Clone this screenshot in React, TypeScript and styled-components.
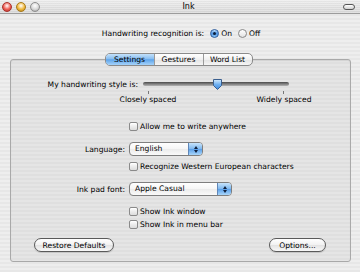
import React from "react";
import styled, { createGlobalStyle } from "styled-components";

const Global = createGlobalStyle`
  html, body { margin: 0; padding: 0; }
  body { width: 360px; height: 272px; overflow: hidden; background: #e9e9e9; }
  * { box-sizing: border-box; }
`;

const FONT = `"DejaVu Sans", "Liberation Sans", sans-serif`;

const Window = styled.div`
  width: 360px;
  height: 272px;
  display: flex;
  flex-direction: column;
  font-family: ${FONT};
  font-size: 7.6px;
  color: #000;
  background: repeating-linear-gradient(180deg, #eeeeee 0 2px, #e7e7e7 2px 4px);
`;

const TitleBar = styled.div`
  height: 14px;
  flex: none;
  display: flex;
  align-items: center;
  padding: 0 5px 0 2px;
  border-bottom: 1px solid #9c9c9c;
  background:
    repeating-linear-gradient(180deg, rgba(255,255,255,0.25) 0 1px, rgba(0,0,0,0.02) 1px 2px),
    linear-gradient(180deg, #ececec 0%, #d8d8d8 100%);
`;

const Lights = styled.div`
  display: flex;
  gap: 4px;
  width: 40px;
`;

const Light = styled.span<{ $c: string; $d: string }>`
  width: 10px;
  height: 10px;
  border-radius: 50%;
  border: 1px solid ${(p) => p.$d};
  background: radial-gradient(circle at 50% 35%, #ffffff 0%, ${(p) => p.$c} 55%, ${(p) => p.$d} 100%);
`;

const Title = styled.div`
  flex: 1;
  text-align: center;
  font-size: 8px;
  padding-right: 8px;
`;

const Pill = styled.span`
  width: 12px;
  height: 6px;
  border-radius: 3px;
  border: 1px solid #555;
  background: linear-gradient(180deg, #fff, #d0d0d0);
`;

const Header = styled.div`
  margin-top: 13px;
  height: 13px;
  display: flex;
  align-items: center;
  justify-content: center;
  gap: 3px;
  padding-left: 2px;
`;

const RadioItem = styled.label`
  display: flex;
  align-items: center;
  gap: 2px;
  margin-left: 3px;
`;

const Radio = styled.span<{ $on?: boolean }>`
  width: 9px;
  height: 9px;
  border-radius: 50%;
  display: flex;
  align-items: center;
  justify-content: center;
  border: 1px solid ${(p) => (p.$on ? "#2a5a9c" : "#888")};
  background: ${(p) =>
    p.$on
      ? "linear-gradient(180deg, #bfe0fb 0%, #4f95e3 50%, #8cc6f6 100%)"
      : "linear-gradient(180deg, #ffffff 0%, #e2e2e2 100%)"};
  &::after {
    content: "";
    width: 3px;
    height: 3px;
    border-radius: 50%;
    background: ${(p) => (p.$on ? "#0b1e3a" : "transparent")};
  }
`;

const TabView = styled.div`
  margin: 13px 9px 0 10px;
  display: flex;
  flex-direction: column;
`;

const TabsRow = styled.div`
  display: flex;
  justify-content: center;
  padding-right: 4px;
  margin-bottom: -7px;
  position: relative;
  z-index: 1;
`;

const Tabs = styled.div`
  display: flex;
  height: 13px;
  border: 1px solid #8a8a8a;
  border-radius: 5px;
  overflow: hidden;
  background: linear-gradient(180deg, #ffffff 0%, #f0f0f0 50%, #e2e2e2 51%, #f6f6f6 100%);
`;

const Tab = styled.div<{ $sel?: boolean; $w: number }>`
  width: ${(p) => p.$w}px;
  display: flex;
  align-items: center;
  justify-content: center;
  border-left: 1px solid #9a9a9a;
  &:first-child { border-left: none; }
  background: ${(p) =>
    p.$sel
      ? "linear-gradient(180deg, #c4e1fa 0%, #86bdf2 45%, #5ea4ea 52%, #a6d3fa 100%)"
      : "transparent"};
`;

const Panel = styled.div`
  height: 203px;
  border: 1px solid #a9a9a9;
  border-radius: 3px;
  box-shadow: inset 0 1px 1px rgba(0,0,0,0.08);
  background: repeating-linear-gradient(180deg, #e5e5e5 0 2px, #dfdfdf 2px 4px);
  padding-top: 18px;
  display: flex;
  flex-direction: column;
`;

const SliderRow = styled.div`
  display: grid;
  grid-template-columns: 127px 150px;
  column-gap: 5px;
`;

const RightLabel = styled.div`
  text-align: right;
  height: 13px;
  line-height: 13px;
  white-space: nowrap;
`;

const SliderBlock = styled.div`
  display: flex;
  flex-direction: column;
  width: 147px;
`;

const TrackArea = styled.div`
  position: relative;
  height: 13px;
  display: flex;
  align-items: center;
`;

const Track = styled.div`
  width: 146px;
  height: 4px;
  margin-top: -2px;
  border-radius: 2px;
  background: linear-gradient(180deg, #4a4a4a 0%, #8a8a8a 60%, #b5b5b5 100%);
`;

const Thumb = styled.svg`
  position: absolute;
  left: 69px;
  top: 0px;
`;

const Ticks = styled.div`
  display: flex;
  justify-content: space-between;
  padding: 0 6px 0 5px;
  height: 3px;
`;

const Tick = styled.span`
  width: 1px;
  height: 3px;
  background: #777;
`;

const ScaleLabels = styled.div`
  display: flex;
  justify-content: space-between;
  margin-left: -30px;
  width: 206px;
  height: 12px;
  line-height: 12px;
`;

const ScaleLabel = styled.span`
  width: 70px;
  text-align: center;
  white-space: nowrap;
`;

const FormRow = styled.div<{ $top: number }>`
  margin-top: ${(p) => p.$top}px;
  display: grid;
  grid-template-columns: 114px auto;
  column-gap: 4px;
  align-items: center;
`;

const Check = styled.label`
  display: flex;
  align-items: center;
  gap: 2px;
  height: 13px;
  white-space: nowrap;
`;

const Box = styled.span`
  width: 9px;
  height: 9px;
  border: 1px solid #8a8a8a;
  border-radius: 2px;
  background: linear-gradient(180deg, #ffffff 0%, #ececec 50%, #dcdcdc 100%);
  box-shadow: inset 0 1px 0 #fff;
`;

const Popup = styled.div<{ $w: number }>`
  width: ${(p) => p.$w}px;
  height: 14px;
  display: flex;
  border: 1px solid #7e7e7e;
  border-radius: 4px;
  overflow: hidden;
  background: linear-gradient(180deg, #ffffff 0%, #f6f6f6 50%, #ebebeb 51%, #fafafa 100%);
`;

const PopupText = styled.span`
  flex: 1;
  padding-left: 5px;
  line-height: 12px;
`;

const PopupArrows = styled.span`
  width: 14px;
  border-left: 1px solid #5f86b8;
  display: flex;
  flex-direction: column;
  align-items: center;
  justify-content: center;
  gap: 1px;
  background: linear-gradient(180deg, #c8e4fb 0%, #7fb8ef 48%, #5a9fe8 52%, #a9d6fb 100%);
`;

const Arrow = styled.span<{ $up?: boolean }>`
  width: 0;
  height: 0;
  border-left: 2px solid transparent;
  border-right: 2px solid transparent;
  ${(p) => (p.$up ? "border-bottom: 3px solid #10213d;" : "border-top: 3px solid #10213d;")}
`;

const ButtonRow = styled.div`
  margin-top: 7px;
  display: flex;
  justify-content: space-between;
  padding: 0 24px 0 23px;
`;

const Button = styled.button<{ $w: number }>`
  width: ${(p) => p.$w}px;
  height: 14px;
  padding: 0;
  font-family: ${FONT};
  font-size: 7.6px;
  color: #000;
  border: 1px solid #5a5a5a;
  border-radius: 7px;
  background: linear-gradient(180deg, #ffffff 0%, #f1f1f1 50%, #e2e2e2 51%, #f8f8f8 100%);
  box-shadow: 0 1px 1px rgba(0,0,0,0.15);
`;

function Checkbox({ label }: { label: string }) {
  return (
    <Check>
      <Box />
      {label}
    </Check>
  );
}

function PopupButton({ value, w }: { value: string; w: number }) {
  return (
    <Popup $w={w}>
      <PopupText>{value}</PopupText>
      <PopupArrows>
        <Arrow $up />
        <Arrow />
      </PopupArrows>
    </Popup>
  );
}

export default function App() {
  return (
    <>
      <Global />
      <Window>
        <TitleBar>
          <Lights>
            <Light $c="#ee5b52" $d="#a8312b" />
            <Light $c="#f0b93c" $d="#a8791a" />
            <Light $c="#d8d8d8" $d="#8e8e8e" />
          </Lights>
          <Title>Ink</Title>
          <Pill />
        </TitleBar>

        <Header>
          <span>Handwriting recognition is:</span>
          <RadioItem>
            <Radio $on />
            On
          </RadioItem>
          <RadioItem>
            <Radio />
            Off
          </RadioItem>
        </Header>

        <TabView>
          <TabsRow>
            <Tabs>
              <Tab $sel $w={48}>Settings</Tab>
              <Tab $w={49}>Gestures</Tab>
              <Tab $w={49}>Word List</Tab>
            </Tabs>
          </TabsRow>
          <Panel>
            <SliderRow>
              <RightLabel>My handwriting style is:</RightLabel>
              <SliderBlock>
                <TrackArea>
                  <Track />
                  <Thumb width="11" height="13" viewBox="0 0 11 13">
                    <defs>
                      <linearGradient id="tg" x1="0" y1="0" x2="0" y2="1">
                        <stop offset="0" stopColor="#d6ecfd" />
                        <stop offset="0.5" stopColor="#6fb0f0" />
                        <stop offset="1" stopColor="#3d86da" />
                      </linearGradient>
                    </defs>
                    <path
                      d="M1.5 1.5 H9.5 V7.5 L5.5 11.5 L1.5 7.5 Z"
                      fill="url(#tg)"
                      stroke="#3b5f8e"
                      strokeWidth="1"
                      strokeLinejoin="round"
                    />
                  </Thumb>
                </TrackArea>
                <Ticks>
                  <Tick />
                  <Tick />
                </Ticks>
                <ScaleLabels>
                  <ScaleLabel>Closely spaced</ScaleLabel>
                  <ScaleLabel>Widely spaced</ScaleLabel>
                </ScaleLabels>
              </SliderBlock>
            </SliderRow>

            <FormRow $top={14}>
              <span />
              <Checkbox label="Allow me to write anywhere" />
            </FormRow>

            <FormRow $top={9}>
              <RightLabel>Language:</RightLabel>
              <PopupButton value="English" w={74} />
            </FormRow>

            <FormRow $top={4}>
              <span />
              <Checkbox label="Recognize Western European characters" />
            </FormRow>

            <FormRow $top={9}>
              <RightLabel>Ink pad font:</RightLabel>
              <PopupButton value="Apple Casual" w={103} />
            </FormRow>

            <FormRow $top={9}>
              <span />
              <Checkbox label="Show Ink window" />
            </FormRow>

            <FormRow $top={0}>
              <span />
              <Checkbox label="Show Ink in menu bar" />
            </FormRow>

            <ButtonRow>
              <Button $w={80}>Restore Defaults</Button>
              <Button $w={57}>Options...</Button>
            </ButtonRow>
          </Panel>
        </TabView>
      </Window>
    </>
  );
}
